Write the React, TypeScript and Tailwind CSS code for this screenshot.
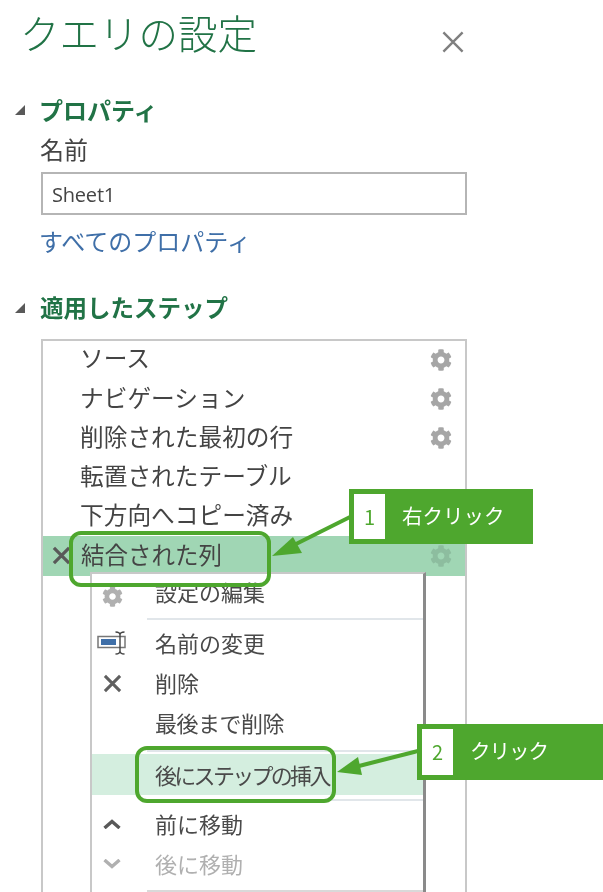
import React from 'react';
import { FaCog } from 'react-icons/fa';

const jp = 'font-["Noto_Sans_CJK_JP","Noto_Sans",sans-serif]';

const steps = [
  { name: 'ソース', gear: true },
  { name: 'ナビゲーション', gear: true },
  { name: '削除された最初の行', gear: true },
  { name: '転置されたテーブル', gear: false },
  { name: '下方向へコピー済み', gear: false },
];

const Triangle: React.FC = () => (
  <svg width="10" height="10" viewBox="0 0 10 10" className="shrink-0">
    <path d="M10 0V10H0Z" fill="#595959" />
  </svg>
);

const Cross: React.FC<{ size: number; width: number; color: string }> = ({ size, width, color }) => (
  <svg width={size} height={size} viewBox="0 0 20 20">
    <path d="M2 2L18 18M18 2L2 18" stroke={color} strokeWidth={width} fill="none" />
  </svg>
);

const MenuRow: React.FC<{ label: string; icon?: React.ReactNode; muted?: boolean; height?: string; labelClass?: string }> = ({
  label,
  icon,
  muted,
  height = 'h-10',
  labelClass = '',
}) => (
  <div className={`flex items-center ${height}`}>
    <div className="w-[40px] mr-[23px] flex justify-center items-center shrink-0">{icon}</div>
    <span className={`text-[22px] leading-none pb-[2px] whitespace-nowrap ${muted ? 'text-[#b0b0b0]' : 'text-[#4a4a4a]'} ${labelClass}`}>{label}</span>
  </div>
);

const Callout: React.FC<{ num: string; label: string; className: string; labelClass: string }> = ({
  num,
  label,
  className,
  labelClass,
}) => (
  <div className={`absolute flex items-center bg-[#4ea72e] p-[5px] ${className}`}>
    <div className="w-[31px] h-full bg-white flex items-center justify-center text-[#4ea72e] text-[20px]">{num}</div>
    <span className={`text-white text-[20.5px] leading-none ${labelClass}`}>{label}</span>
  </div>
);

const App: React.FC = () => {
  return (
    <div className={`relative w-[603px] h-[892px] overflow-hidden bg-white blur-[0.4px] ${jp}`}>
      <div className="pl-[15px] w-[467px] box-content">
        {/* title */}
        <div className="flex items-center justify-between h-[64px] pl-[5px]">
          <h1 className="text-[39.5px] leading-none font-light text-[#217346]">クエリの設定</h1>
          <div className="mt-[20px] mr-[17px]">
            <Cross size={24} width={2} color="#7f7f7f" />
          </div>
        </div>

        {/* properties */}
        <div className="flex items-center gap-[15px] h-[32px] mt-[30px]">
          <Triangle />
          <h2 className="text-[24px] leading-none font-bold text-[#217346] -ml-[1px]">プロパティ</h2>
        </div>
        <div className="pl-[25px] mt-[8px] text-[24px] leading-[30px] text-[#444444] h-[32px]">名前</div>
        <div className="ml-[26px] w-[426px] h-[43px] mt-[6px] border-2 border-[#b5b5b5] flex items-center pl-[9px] pt-[3px]">
          <span className="font-['Open_Sans',sans-serif] text-[20px] tracking-[-0.2px] text-[#444444]">Sheet1</span>
        </div>
        <div className="pl-[24px] mt-[9px] text-[24px] leading-[34px] text-[#3f6fa8]">すべてのプロパティ</div>

        {/* applied steps */}
        <div className="flex items-center gap-[15px] h-[32px] mt-[34px]">
          <Triangle />
          <h2 className="text-[23.5px] leading-none font-bold text-[#217346]">適用したステップ</h2>
        </div>
        <div className="ml-[26px] w-[426px] h-[560px] mt-[15px] border-2 border-[#c8c8c8]">
          {steps.map((s, i) => (
            <div key={s.name} className={`flex items-center justify-between pl-[37px] pr-[13px] ${i === 0 ? 'h-[38.2px]' : 'h-[39.2px]'}`}>
              <span className={`text-[23.7px] leading-none text-[#444444] ${i === 0 ? 'pb-[4px]' : 'pb-[2px]'}`}>{s.name}</span>
              {s.gear && <FaCog size={22} color="#a6a6a6" />}
            </div>
          ))}
          <div className="flex items-center justify-between h-[40px] bg-[#a0d6b4] pr-[13px] pl-[9px]">
            <div className="flex items-center gap-[10px]">
              <Cross size={19} width={3.4} color="#595959" />
              <span className="text-[23.5px] leading-none pb-[2px] text-[#444444]">結合された列</span>
            </div>
            <FaCog size={22} color="#8dbd9f" />
          </div>
        </div>
      </div>

      {/* context menu */}
      <div className="absolute left-[90px] top-[572px] w-[336px] h-[330px] bg-white border-l-2 border-t-2 border-r-[3px] border-[#c8c8c8] border-r-[#8a8a8a]">
        <MenuRow label="設定の編集" height="h-[36px]" icon={<div className="mt-[9px]"><FaCog size={21} color="#b0b0b0" /></div>} />
        <div className="h-[8px]" />
        <div className="ml-[55px] h-[2px] bg-[#e1e6ea]" />
        <div className="h-[3px]" />
        <MenuRow
          label="名前の変更"
          icon={
            <svg width="30" height="24" viewBox="0 0 30 24">
              <rect x="1" y="5.5" width="27" height="11" fill="#fff" stroke="#777777" strokeWidth="1.5" />
              <rect x="4" y="8" width="15" height="6" fill="#3f6fa8" />
              <path d="M18.5 1C21 1 23 2 23 4V20C23 22 21 23 18.5 23M27.5 1C25 1 23 2 23 4M27.5 23C25 23 23 22 23 20" stroke="#444444" strokeWidth="1.4" fill="none" />
            </svg>
          }
        />
        <MenuRow label="削除" icon={<Cross size={19} width={3.2} color="#5f5f5f" />} />
        <MenuRow label="最後まで削除" labelClass="tracking-[-0.5px]" />
        <div className="h-[7px]" />
        <div className="ml-[55px] h-[2px] bg-[#e1e6ea]" />
        <div className="h-[2px]" />
        <div className="bg-[#d4eedf]">
          <MenuRow label="後にステップの挿入" height="h-[41px]" labelClass="tracking-[-2.7px]" />
        </div>
        <div className="h-[4px]" />
        <div className="ml-[55px] h-[2px] bg-[#e1e6ea]" />
        <div className="h-[3px]" />
        <MenuRow
          label="前に移動"
          icon={
            <svg width="18" height="10" viewBox="0 0 18 10">
              <path d="M1.5 9L9 2.5L16.5 9" stroke="#595959" strokeWidth="3.4" fill="none" />
            </svg>
          }
        />
        <MenuRow
          label="後に移動"
          muted
          icon={
            <svg width="18" height="10" viewBox="0 0 18 10">
              <path d="M1.5 1L9 7.5L16.5 1" stroke="#b0b0b0" strokeWidth="3.4" fill="none" />
            </svg>
          }
        />
        <div className="h-[6px]" />
        <div className="ml-[55px] h-[2px] bg-[#d9d9d9]" />
      </div>

      {/* highlight rings */}
      <div className="absolute left-[69px] top-[531px] w-[202px] h-[56px] rounded-[12px] border-[4px] border-[#4ea72e]" />
      <div className="absolute left-[135px] top-[746px] w-[201px] h-[57px] rounded-[12px] border-[4px] border-[#4ea72e]" />

      {/* arrows */}
      <svg className="absolute left-0 top-0" width="603" height="892" viewBox="0 0 603 892">
        <path d="M350 517L288 548" stroke="#4ea72e" strokeWidth="4" fill="none" />
        <path d="M272 556L293 537L302 553Z" fill="#4ea72e" />
        <path d="M418 751L355 767" stroke="#4ea72e" strokeWidth="4" fill="none" />
        <path d="M337 772L358 757L362 775Z" fill="#4ea72e" />
      </svg>

      <Callout num="1" label="右クリック" className="left-[349px] top-[489px] w-[184px] h-[55px]" labelClass="ml-[17px] pb-[3px]" />
      <Callout num="2" label="クリック" className="left-[417px] top-[724px] w-[186px] h-[56px]" labelClass="ml-[17px] pb-[4px] tracking-[-1px]" />
    </div>
  );
};

export default App;
